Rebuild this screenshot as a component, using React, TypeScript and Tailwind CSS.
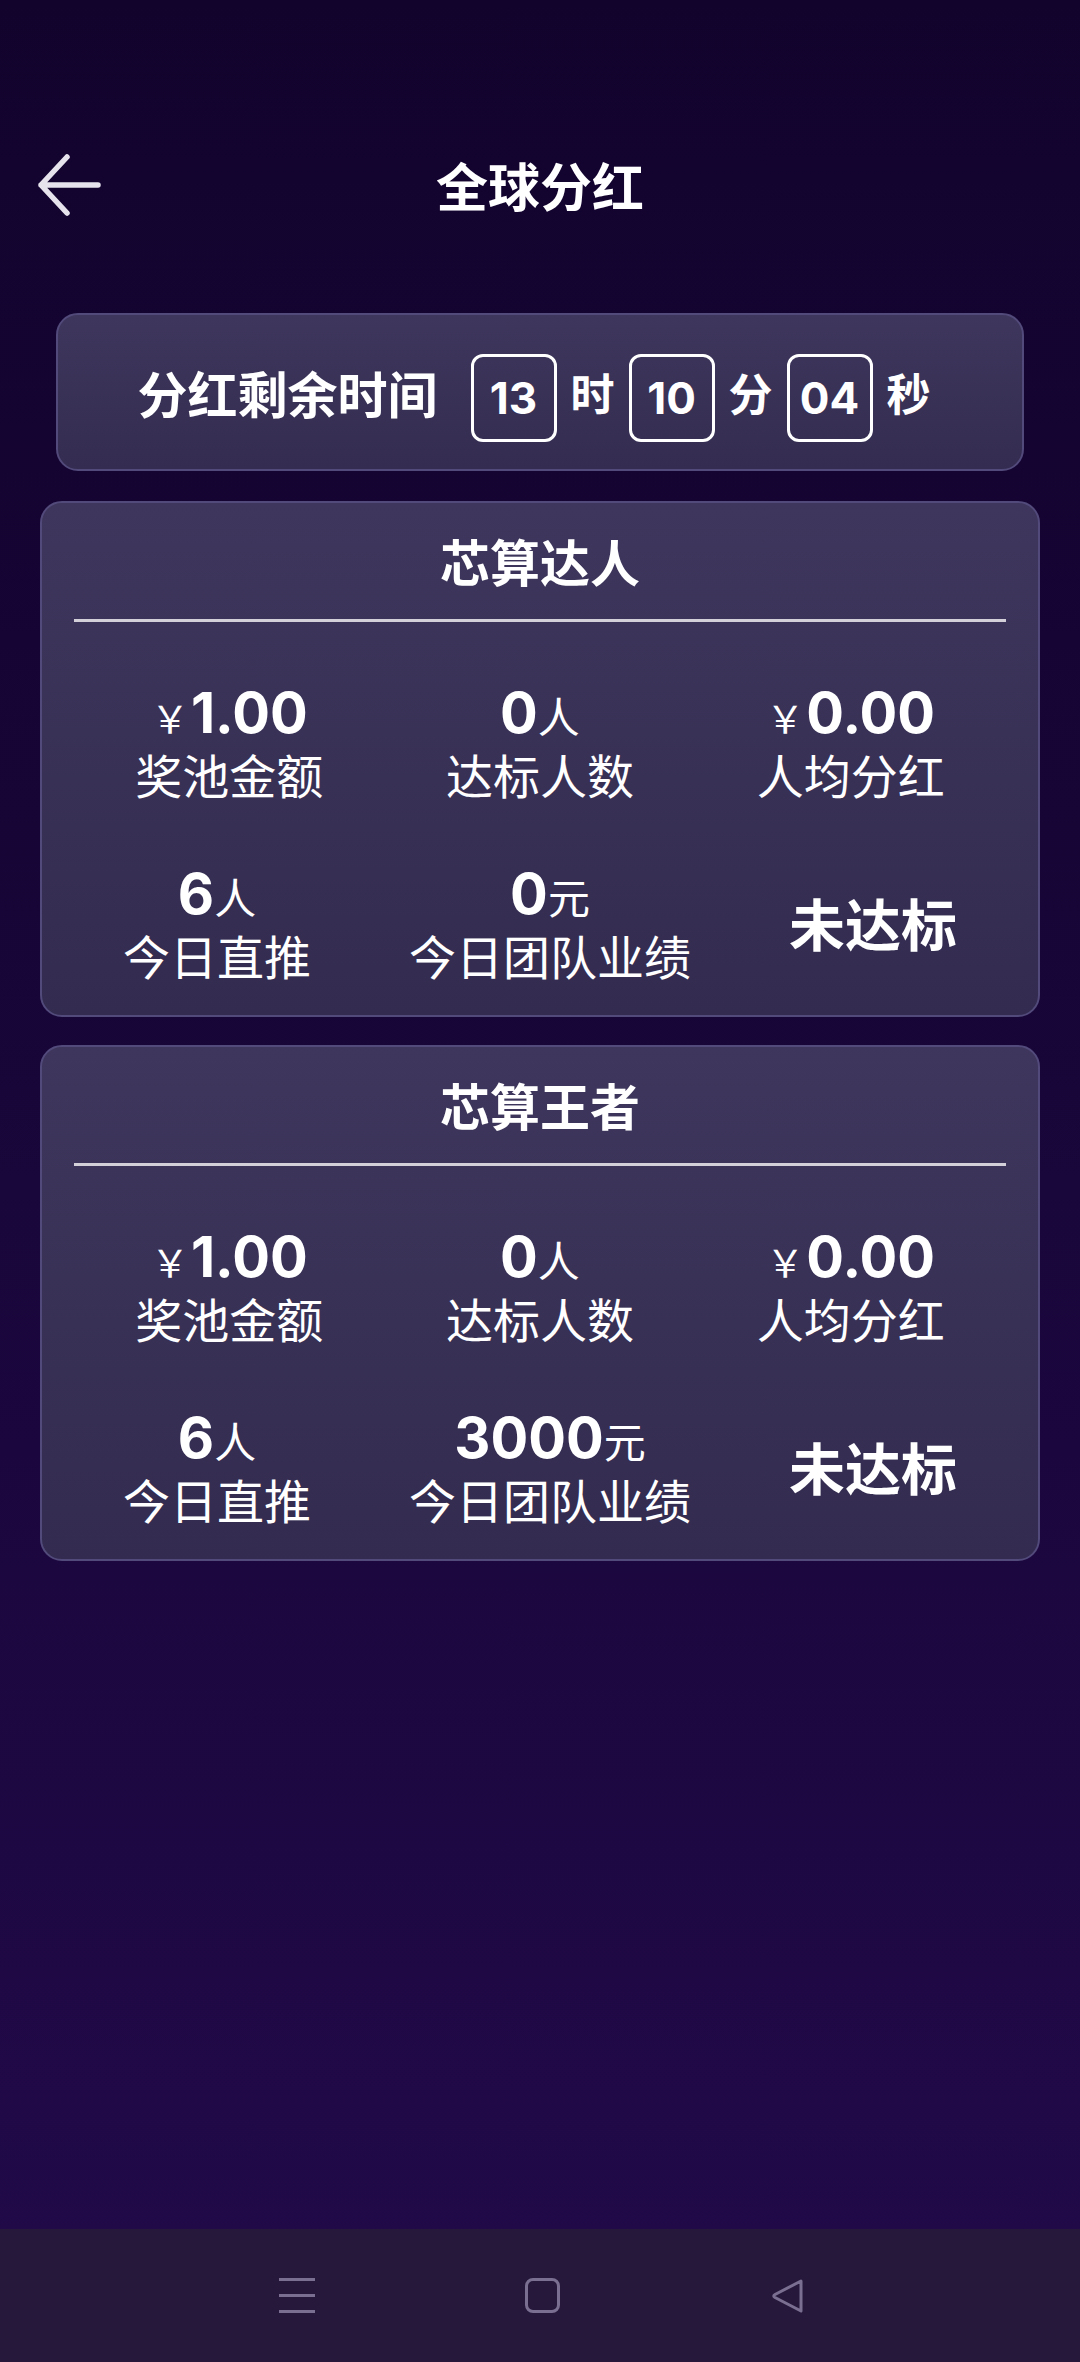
const cjk = "font-['Noto_Sans_CJK_SC',sans-serif]";
const num = "font-['Inter','Noto_Sans_CJK_SC',sans-serif]";

type StatProps = {
  prefix?: string;
  value: string;
  unit?: string;
  label: string;
};

const Stat = ({ prefix, value, unit, label }: StatProps) => {
  return (
    <div className="flex flex-col items-center">
      <div className="flex items-baseline h-[64px] leading-[64px]">
        {prefix && (
          <span className={`${cjk} text-[38px] mr-[2px]`}>{prefix}</span>
        )}
        <span className={`${num} text-[56px] font-bold`}>{value}</span>
        {unit && <span className={`${cjk} text-[42px]`}>{unit}</span>}
      </div>
      <div className={`${cjk} mt-[2px] text-[47px] leading-[54px]`}>{label}</div>
    </div>
  );
};

type CardProps = {
  title: string;
  direct: string;
  team: string;
};

const RankCard = ({ title, direct, team }: CardProps) => {
  return (
    <div className="mx-[40px] rounded-[22px] border-2 border-[#524a7a] bg-linear-to-b from-[#3e365c] to-[#332c50] px-[32px] pt-[24px] pb-[33px] text-white">
      <div className={`${cjk} h-[70px] text-center text-[50px] font-bold leading-[66px]`}>
        {title}
      </div>
      <div className="mt-[22px] h-[3px] bg-[#d3d0da]"></div>
      <div className="mt-[59px] flex justify-around">
        <Stat prefix="￥" value="1.00" label="奖池金额" />
        <Stat value="0" unit="人" label="达标人数" />
        <Stat prefix="￥" value="0.00" label="人均分红" />
      </div>
      <div className="mt-[61px] flex items-center justify-around">
        <Stat value={direct} unit="人" label="今日直推" />
        <Stat value={team} unit="元" label="今日团队业绩" />
        <div className={`${cjk} text-[56px] font-bold leading-none`}>未达标</div>
      </div>
    </div>
  );
};

const TimeBox = ({ v }: { v: string }) => {
  return (
    <div className={`${num} mt-[12px] flex h-[88px] w-[86px] items-center justify-center rounded-[12px] border-[3px] border-white text-[44px] font-bold`}>
      {v}
    </div>
  );
};

const App = () => {
  return (
    <div className="flex h-[2362px] flex-col bg-linear-to-b from-[#12032d] via-[#19063a] to-[#220a4a] text-white">
      <div className="flex-1 pt-[130px]">
        <div className="grid h-[110px] grid-cols-[1fr_auto_1fr] items-center">
          <div className="pl-[37px]">
            <svg width="64" height="64" viewBox="0 0 64 64" fill="none">
              <path
                d="M61 32H4M30 4L4 32L30 60"
                stroke="#e6e3ec"
                strokeWidth="5.5"
                strokeLinecap="round"
                strokeLinejoin="round"
              />
            </svg>
          </div>
          <h1 className={`${cjk} text-[52px] font-bold leading-none`}>全球分红</h1>
          <div></div>
        </div>

        <div className="mx-[56px] mt-[73px] flex h-[158px] items-center justify-center rounded-[22px] border-2 border-[#524a7a] bg-linear-to-b from-[#3e365c] to-[#342d51] pr-[12px]">
          <span className={`${cjk} mr-[33px] text-[50px] font-bold`}>分红剩余时间</span>
          <TimeBox v="13" />
          <span className={`${cjk} mx-[14px] text-[44px] font-bold`}>时</span>
          <TimeBox v="10" />
          <span className={`${cjk} mx-[14px] text-[44px] font-bold`}>分</span>
          <TimeBox v="04" />
          <span className={`${cjk} ml-[14px] text-[44px] font-bold`}>秒</span>
        </div>

        <div className="mt-[30px]">
          <RankCard title="芯算达人" direct="6" team="0" />
        </div>
        <div className="mt-[28px]">
          <RankCard title="芯算王者" direct="6" team="3000" />
        </div>
      </div>

      <div className="flex h-[133px] items-center justify-center gap-[210px] bg-[#25183a] pl-[4px]">
        <div className="flex h-[35px] w-[36px] flex-col justify-between">
          <div className="h-[3px] bg-[#7b6f91]"></div>
          <div className="h-[3px] bg-[#7b6f91]"></div>
          <div className="h-[3px] bg-[#7b6f91]"></div>
        </div>
        <div className="h-[35px] w-[35px] rounded-[8px] border-[3px] border-[#7b6f91]"></div>
        <svg width="35" height="36" viewBox="0 0 35 36" fill="none">
          <path
            d="M31 3L5 16.5Q2.5 18 5 19.5L31 33Z"
            stroke="#7b6f91"
            strokeWidth="3"
            strokeLinejoin="round"
          />
        </svg>
      </div>
    </div>
  );
};

export default App;
